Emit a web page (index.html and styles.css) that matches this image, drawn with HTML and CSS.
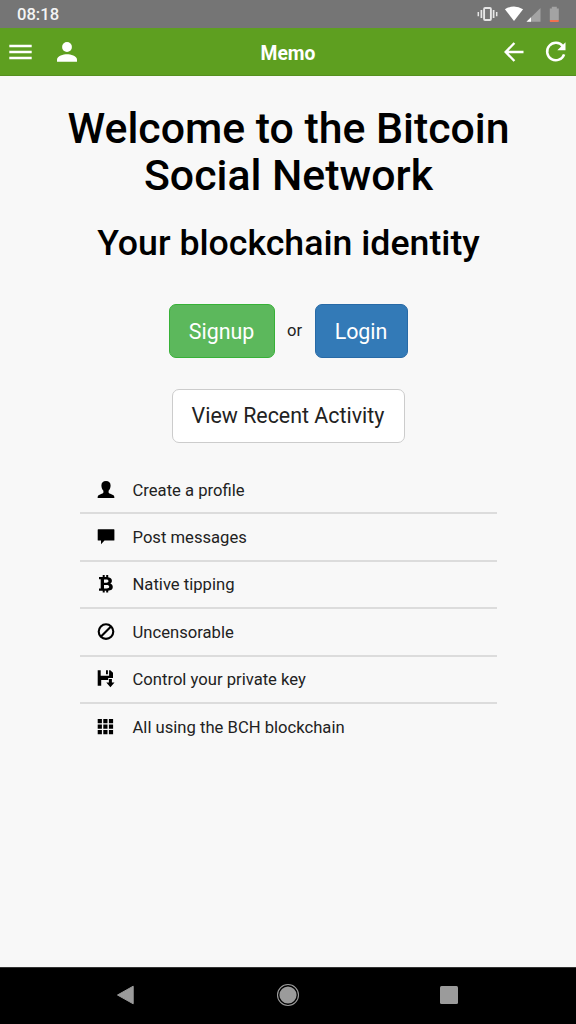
FILE: index.html
```html
<!DOCTYPE html>
<html lang="en">
<head>
<meta charset="utf-8">
<title>Memo</title>
<link rel="stylesheet" href="styles.css">
</head>
<body>
<div class="screen">
  <div class="status">
    <span class="clock">08:18</span>
    <svg class="status-icons" width="100" height="28" viewBox="0 0 100 28">
      <g fill="none" stroke="#e6e6e6">
        <rect x="8.1" y="8" width="6.800" height="12" rx="1" stroke-width="1.900"/>
        <path d="M5.400 10v8M17.600 10v8" stroke-width="1.700"/>
        <path d="M2.300 12v4.200M20.700 12v4.200" stroke-width="1.500"/>
      </g>
      <path d="M28.900 9.200Q38 4 47.100 9.200L38 21Z" fill="#fff"/>
      <path d="M50.500 21.700L64.500 8V21.700Z" fill="#a3a3a3"/>
      <path d="M50.500 21.700L55 17.300V21.700Z" fill="#fff"/>
      <path d="M73.800 8.500h2V6.800h5v1.700h2v11.500h-9z" fill="#a3a3a3"/>
      <path d="M73.800 20h9v1.200q0 .8-.8.8h-7.400q-.8 0-.8-.8z" fill="#f2704f"/>
    </svg>
  </div>
  <header class="bar">
    <div class="bar-side">
      <svg width="24" height="20" viewBox="0 0 24 20"><path d="M1.300 3.900h22.400M1.300 10h22.400M1.300 16.100h22.400" stroke="#fff" stroke-width="2.500"/></svg>
      <svg class="user" width="20" height="20" viewBox="0 0 20 20" fill="#fff"><circle cx="10" cy="5" r="4.900"/><path d="M0 19.700v-2.200C0 14.200 6.500 12.300 10 12.300s10 1.900 10 5.200v2.200z"/></svg>
    </div>
    <h1 class="bar-title">Memo</h1>
    <div class="bar-side bar-right">
      <svg width="20" height="20" viewBox="0 0 20 20" fill="none" stroke="#fff" stroke-width="2.400"><path d="M19.500 10H2M10.400 1L1.700 10 10.400 19"/></svg>
      <svg class="reload" width="22" height="22" viewBox="0 0 22 22"><path d="M17.800 5.300A8.700 8.700 0 1 0 19.100 13.300" fill="none" stroke="#fff" stroke-width="2.500"/><path d="M20.500 1.200V9.200H12.300Z" fill="#fff"/></svg>
    </div>
  </header>
  <main class="content">
    <h2 class="headline">Welcome to the Bitcoin<br>Social Network</h2>
    <h3 class="tagline">Your blockchain identity</h3>
    <div class="actions">
      <a class="btn signup">Signup</a>
      <span class="or">or</span>
      <a class="btn login">Login</a>
    </div>
    <a class="btn recent">View Recent Activity</a>
    <ul class="features">
      <li><svg width="18" height="18" viewBox="0 0 18 18"><path d="M9 .1C11.900.1 13.600 1.900 13.600 4.500C13.600 6.800 12.800 8.500 11.600 9.700V11.200C11.600 12 12.300 12.400 13.300 12.800L16.500 14.200Q17.400 14.700 17.400 17H.6Q.6 14.700 1.500 14.200L4.700 12.800C5.700 12.400 6.400 12 6.400 11.200V9.700C5.200 8.500 4.400 6.800 4.400 4.500C4.400 1.900 6.100.1 9 .1Z"/></svg><span>Create a profile</span></li>
      <li><svg width="18" height="18" viewBox="0 0 18 18"><path d="M1.300 1.200h15.600q.5 0 .5.500v10.400q0 .5-.5.500H7.500L4 16.200V12.600H1.200q-.5 0-.5-.5V1.700q0-.5.600-.5z"/></svg><span>Post messages</span></li>
      <li><svg width="18" height="18" viewBox="0 0 18 18"><path fill-rule="evenodd" d="M2 2.100H5.700V.1H7.700V2.100H9.200V.1H11.200V2.200C13.800 2.600 14.900 3.900 14.900 5.700C14.900 7.100 14.300 8 13.100 8.600C14.800 9.100 15.800 10.200 15.800 12C15.800 14.300 14.200 15.500 11.200 15.700V17.500H9.200V15.700H7.700V17.500H5.700V15.700H2V13.500H3.700V4.300H2ZM7 4.400V7.700H9.300C10.700 7.700 11.500 7.100 11.500 6.100C11.500 5 10.700 4.400 9.300 4.400ZM7 9.900V13.400H9.600C11.300 13.400 12.200 12.800 12.200 11.700C12.200 10.500 11.300 9.900 9.600 9.900Z"/></svg><span>Native tipping</span></li>
      <li><svg width="18" height="18" viewBox="0 0 18 18"><g fill="none" stroke="#000" stroke-width="2.100"><circle cx="9" cy="8.600" r="7.300"/><path d="M4 13.600L14 3.600"/></g></svg><span>Uncensorable</span></li>
      <li><svg width="18" height="18" viewBox="0 0 18 18"><path d="M.7.300H3.700V5.700H12.100V.3H13.300L16 2.800V8H11.200V10H4.200V15.700H.7Z"/><path d="M9 .300h1.900v3.900H9zM11.900 9h3v3.600h2.600L13.400 17.200 9.300 12.600h2.600z"/></svg><span>Control your private key</span></li>
      <li><svg width="18" height="18" viewBox="0 0 18 18"><path d="M.7 1h4.200v4.200H.7zm5.600 0h4.200v4.200H6.300zm5.600 0h4.200v4.200h-4.200zM.7 6.500h4.200v4.200H.7zm5.600 0h4.200v4.200H6.300zm5.600 0h4.200v4.200h-4.200zM.7 12h4.200v4.200H.7zm5.600 0h4.200v4.200H6.300zm5.600 0h4.200v4.200h-4.200z"/></svg><span>All using the BCH blockchain</span></li>
    </ul>
  </main>
  <nav class="nav">
    <svg width="24" height="24" viewBox="0 0 24 24"><path d="M4.500 12L20.200 3.200V20.800Z" fill="#9b9b9b" stroke="#9b9b9b" stroke-linejoin="round"/></svg>
    <svg width="24" height="24" viewBox="0 0 24 24"><circle cx="12" cy="12" r="8.600" fill="#9b9b9b"/><circle cx="12" cy="12" r="10.500" fill="none" stroke="#9b9b9b" stroke-width="1.100"/></svg>
    <svg width="24" height="24" viewBox="0 0 24 24"><rect x="3" y="3" width="18" height="18" rx="1.500" fill="#9b9b9b"/></svg>
  </nav>
</div>
</body>
</html>
```
FILE: styles.css
```css
* { box-sizing: border-box; }
body { margin: 0; font-family: Roboto, "Liberation Sans", sans-serif; color: #222; }
.screen { width: 576px; height: 1024px; display: flex; flex-direction: column; background: #f8f8f8; overflow: hidden; }
.status { height: 28px; flex: none; background: #757575; display: flex; justify-content: space-between; align-items: center; }
.clock { color: #f4f4f4; font-size: 16.600px; font-weight: 500; line-height: 28px; padding: 2px 0 0 17px; }
.bar { height: 48px; flex: none; background: #5e9f20; border-bottom: 1px solid #568f20; display: flex; align-items: center; justify-content: space-between; padding: 1px 9px 0 8px; }
.bar-side { display: flex; align-items: center; width: 200px; }
.user { margin-left: 25px; }
.bar-right { justify-content: flex-end; }
.reload { margin-left: 21px; }
.bar-title { margin: 0; color: #fff; font-size: 19.300px; font-weight: 700; line-height: 24px; padding: 4px 0 0 1px; }
.content { flex: 1; display: flex; flex-direction: column; align-items: center; }
.headline { margin: 29px 0 0; font-size: 42.800px; font-weight: 500; line-height: 47px; color: #000; text-align: center; white-space: nowrap; padding-left: 1px; }
.tagline { margin: 24px 0 0; font-size: 35.700px; font-weight: 500; line-height: 41px; color: #000; white-space: nowrap; padding-left: 1px; }
.actions { display: flex; align-items: center; margin-top: 40px; }
.btn { display: flex; align-items: center; justify-content: center; height: 54px; border: 1px solid; border-radius: 7px; font-size: 21.400px; color: #fff; white-space: nowrap; }
.signup { width: 106px; background: #5cb85c; border-color: #37b137; }
.or { width: 40px; text-align: center; font-size: 16.600px; padding-bottom: 2px; }
.login { width: 93px; background: #337ab7; border-color: #286aa6; }
.recent { width: 233px; margin-top: 31px; padding-bottom: 2px; background: #fff; border-color: #ccc; color: #222; }
.features { list-style: none; margin: 24px 0 0; padding: 0; width: 417px; }
.features li { display: flex; align-items: center; height: 47.400px; padding-left: 17px; border-bottom: 2px solid #dcdcdc; font-size: 16.640px; }
.features li:last-child { height: 46px; border-bottom: 0; }
.features svg { margin-right: 18px; flex: none; }
.features span { padding-top: 1px; }
.nav { height: 57px; flex: none; background: #000; border-top: 1px solid #333; display: flex; align-items: center; justify-content: space-between; padding: 0 115px 2px 113px; }
.nav svg:nth-child(2) { margin-left: 2px; }
```
